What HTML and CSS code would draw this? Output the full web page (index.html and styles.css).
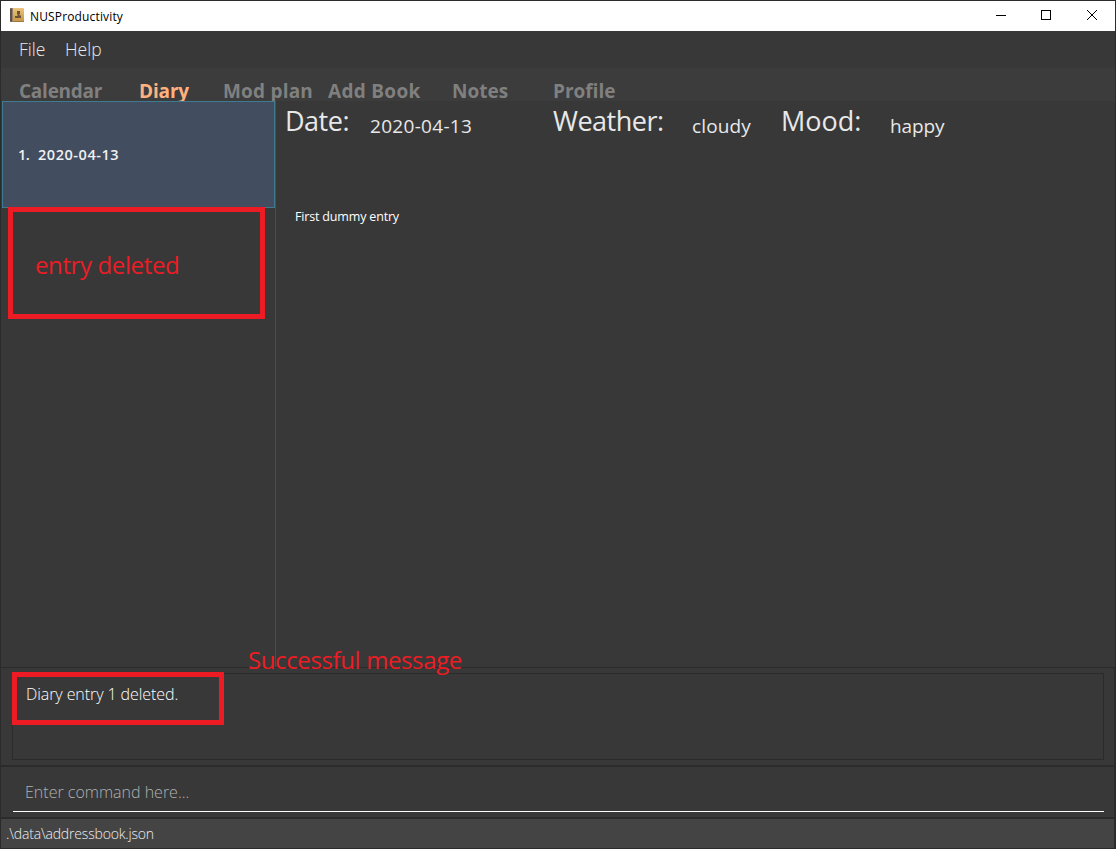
FILE: index.html
```
<!DOCTYPE html>
<html lang="en">
<head>
<meta charset="utf-8">
<title>NUSProductivity</title>
<link rel="stylesheet" href="styles.css">
</head>
<body>
<div class="window">
  <header class="titlebar">
    <svg class="app-icon" width="14" height="14" viewBox="0 0 14 14">
      <defs><linearGradient id="cover" x1="0" y1="0" x2="0" y2="1"><stop offset="0" stop-color="#ecc47f"/><stop offset="1" stop-color="#c59345"/></linearGradient></defs>
      <rect width="14" height="14" rx="1" fill="url(#cover)"/>
      <rect width="2" height="14" rx="1" fill="#5f5047"/>
      <rect x="2" width="1" height="14" fill="#94836d"/>
      <rect x="3" y="13" width="11" height="1" fill="#a27637"/>
      <path d="M7 3h3v3H9.500v1.500H11V10H5V8h2.500V6H7z" fill="#6b5230"/>
    </svg>
    <span class="app-name">NUSProductivity</span>
    <svg class="controls" width="102" height="14" viewBox="0 0 102 14" shape-rendering="crispEdges">
      <path d="M0 7.500h10M45.500 2.500h9v9h-9z" fill="none" stroke="#000"/>
      <path d="M91 2l10 10M101 2L91 12" fill="none" stroke="#000" shape-rendering="auto"/>
    </svg>
  </header>
  <nav class="menubar"><span class="menu-file">File</span><span class="menu-help">Help</span></nav>
  <nav class="tabs">
    <span class="tab tab-calendar">Calendar</span>
    <span class="tab tab-diary">Diary</span>
    <span class="tab tab-mod">Mod plan</span>
    <span class="tab tab-book">Add Book</span>
    <span class="tab tab-notes">Notes</span>
    <span class="tab tab-profile">Profile</span>
  </nav>
  <main class="content">
    <aside class="entries">
      <div class="entry"><span class="entry-index">1.</span><span class="entry-date">2020-04-13</span></div>
      <div class="callout callout-entry"><span>entry deleted</span></div>
    </aside>
    <article class="detail">
      <div class="facts">
        <span class="label label-date">Date:</span><span class="value value-date">2020-04-13</span>
        <span class="label label-weather">Weather:</span><span class="value value-weather">cloudy</span>
        <span class="label label-mood">Mood:</span><span class="value value-mood">happy</span>
      </div>
      <p class="body-text">First dummy entry</p>
    </article>
  </main>
  <section class="result">
    <div class="result-box"><span class="result-text">Diary entry 1 deleted.</span></div>
    <div class="callout callout-result"></div>
    <span class="note">Successful message</span>
  </section>
  <section class="command"><div class="command-field"><span class="command-text">Enter command here...</span></div></section>
  <footer class="status"><span class="status-text">.\data\addressbook.json</span></footer>
</div>
</body>
</html>
```
FILE: styles.css
```
* { box-sizing: border-box; }
body { margin: 0; background: #2b2b2b; }
.window {
  width: 1116px; height: 849px; overflow: hidden;
  display: flex; flex-direction: column;
  border: 1px solid #2b2b2b;
  background: #383838; color: #fff;
  font-family: "Open Sans", "Noto Sans", sans-serif;
  white-space: nowrap;
}
.titlebar {
  height: 30px; flex: none; background: #fff; color: #000;
  display: flex; align-items: center; padding: 0 17px 0 9px;
}
.app-icon { margin-top: -2px; }
.app-name { margin: 1px 0 0 6px; font-size: 12px; line-height: 20px; letter-spacing: .15px; }
.controls { margin-left: auto; margin-top: -2px; }
.menubar {
  height: 37px; flex: none; display: flex; padding: 5px 0 0 18px;
  font-size: 17.5px; line-height: 26px; font-weight: 300; color: #e8e8e8;
}
.menu-file { width: 46px; }
.tabs {
  height: 33px; flex: none; display: flex; padding: 9px 0 0 18px;
  background: #3c3c3c; color: #808080;
  font-size: 19px; line-height: 28px; font-weight: 700;
}
.tab { flex: none; }
.tab-calendar { width: 120px; letter-spacing: -.25px; }
.tab-diary { width: 84px; color: #ffb27f; letter-spacing: -.15px; }
.tab-mod { width: 105px; letter-spacing: .2px; }
.tab-book { width: 124px; letter-spacing: .3px; }
.tab-notes { width: 101px; }
.content { position: relative; height: 566px; flex: none; display: flex; background: #383838; }
.entries { width: 275px; flex: none; border-right: 1px solid #4d4d4d; padding-left: 1px; }
.entry {
  height: 107px; width: 273px; background: #424d5f; border: 1px solid #3e7b91;
  display: flex; align-items: center; padding: 0 0 1px 15px;
  font-size: 14.5px; font-weight: 600; color: #f0f0f0;
}
.entry-index { width: 20px; letter-spacing: -.5px; }
.entry-date { letter-spacing: .55px; }
.callout { border: 5px solid #ed1c24; }
.callout-entry {
  width: 257px; height: 112px; margin: -1px 0 0 6px; padding: 37px 0 0 22px;
  position: relative; color: #ed1c24; font-size: 24px; line-height: 32px; letter-spacing: -.38px;
}
.facts { display: flex; height: 42px; padding-left: 9px; color: #e8e8e8; }
.label { font-size: 27px; line-height: 40px; }
.value { font-size: 19px; line-height: 50px; }
.label-date { width: 85px; letter-spacing: -.5px; }
.value-date { width: 183px; letter-spacing: .3px; }
.label-weather { width: 139px; letter-spacing: -.5px; }
.value-weather { width: 89px; letter-spacing: .15px; }
.label-mood { width: 109px; }
.value-mood { letter-spacing: -.1px; }
.body-text { margin: 64px 0 0 19px; font-size: 12.5px; line-height: 20px; letter-spacing: -.17px; }
.result {
  position: relative; height: 100px; flex: none;
  border-top: 1px solid #2b2b2b; border-bottom: 2px solid #2b2b2b;
  border-right: 1px solid #2b2b2b; padding: 5px 10px 0 11px;
}
.result-box { height: 87px; border: 1px solid #2b2b2b; padding: 7px 0 0 13px; }
.result-text { display: block; font-size: 16px; line-height: 26px; font-weight: 300; letter-spacing: -.08px; }
.callout-result { position: absolute; left: 11px; top: 4px; width: 212px; height: 53px; }
.note {
  position: absolute; left: 247px; top: -24px;
  font-size: 24px; line-height: 32px; letter-spacing: -.38px; color: #ed1c24;
}
.command { height: 52px; flex: none; border-bottom: 2px solid #2b2b2b; border-right: 1px solid #2b2b2b; padding: 5px 10px 0 12px; }
.command-field { height: 40px; border-bottom: 1px solid #fff; padding: 7px 0 0 12px; }
.command-text { display: block; font-size: 16px; line-height: 26px; font-weight: 300; color: #b0b0b0; }
.status { flex: 1; background: #444; border-right: 1px solid #2b2b2b; padding: 3px 0 0 5px; }
.status-text { display: block; font-size: 14px; line-height: 24px; font-weight: 300; letter-spacing: -.18px; color: #eee; }
```
